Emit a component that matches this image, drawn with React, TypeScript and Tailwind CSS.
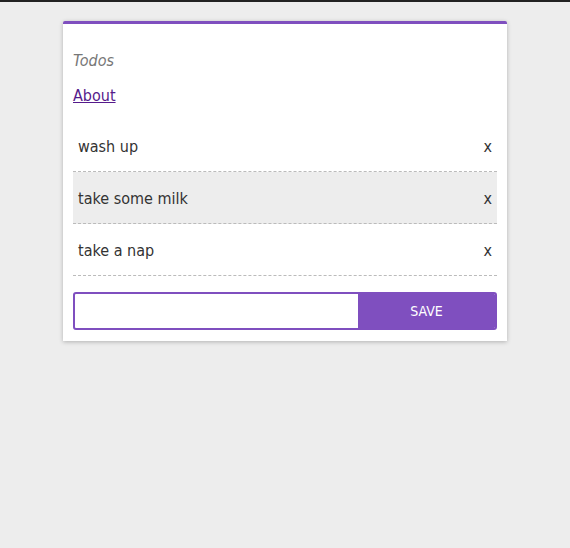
const todos = ["wash up", "take some milk", "take a nap"];

export default function App() {
  return (
    <div
      className="min-h-[548px] bg-[#ededed] border-t-2 border-[#222] text-[#333]"
      style={{ fontFamily: "'DejaVu Sans Condensed', 'Liberation Sans', sans-serif" }}
    >
      <div className="mx-auto mt-[19px] w-[444px] bg-white border-t-[3px] border-[#7f4fbf] rounded-t-[2px] shadow-[0_1px_4px_rgba(0,0,0,0.25)] px-[10px] pt-[27px] pb-[11px]">
        <h1 className="text-[16px] leading-[20px] italic text-[#777]">Todos</h1>
        <a href="#" className="block mt-[15px] w-fit text-[16px] leading-[20px] text-[#551a8b] underline">
          About
        </a>
        <ul className="mt-[14px]">
          {todos.map((t, i) => (
            <li
              key={t}
              className={`flex items-center justify-between h-[52px] pt-[2px] px-[5px] border-b border-dashed border-[#bbb] text-[16px] ${
                i === 1 ? "bg-[#ededed]" : ""
              }`}
            >
              <span>{t}</span>
              <span>x</span>
            </li>
          ))}
        </ul>
        <form className="mt-[16px] flex h-[38px] rounded-[3px] border-2 border-[#7f4fbf] overflow-hidden">
          <input className="flex-1 outline-none px-2 text-[16px]" />
          <button type="button" className="w-[137px] bg-[#7f4fbf] text-white text-[14px] uppercase">
            Save
          </button>
        </form>
      </div>
    </div>
  );
}
